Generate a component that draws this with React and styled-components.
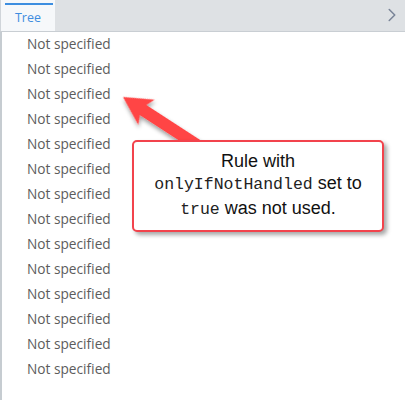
import React from "react";
import styled, { createGlobalStyle } from "styled-components";
import { ChevronRight } from "lucide-react";

const Global = createGlobalStyle`
  html, body { margin: 0; padding: 0; background: #ffffff; }
  body { width: 405px; height: 400px; overflow: hidden; font-family: "Open Sans", "Noto Sans", sans-serif; }
  #root { width: 405px; height: 400px; }
`;

const Page = styled.div`
  position: relative;
  width: 405px;
  height: 400px;
  display: flex;
  flex-direction: column;
  background: #ffffff;
`;

const TabBar = styled.div`
  height: 31px;
  flex: none;
  display: flex;
  align-items: stretch;
  justify-content: space-between;
  background: #dee1e4;
  border-bottom: 1px solid #c9ced3;
`;

const Tab = styled.div`
  width: 54px;
  display: flex;
  flex-direction: column;
  background: #f6f8fa;
  border-left: 1px solid #d0d5da;
`;

const TabIndicator = styled.div`
  height: 2px;
  margin: 3px 2px 0 4px;
  background: #3d8ee0;
`;

const TabLabel = styled.div`
  flex: 1;
  display: flex;
  align-items: center;
  justify-content: center;
  padding-bottom: 2px;
  font-size: 12.5px;
  color: #3f8de0;
`;

const ScrollButton = styled.div`
  display: flex;
  align-items: center;
  padding: 0 2px 2px 0;
  color: #7a8598;
`;

const Body = styled.div`
  flex: 1;
  display: flex;
  flex-direction: column;
  border-left: 2px solid #c6ccd1;
`;

const Row = styled.div`
  height: 25px;
  box-sizing: border-box;
  flex: none;
  display: flex;
  align-items: center;
  padding: 0 0 2px 25px;
  font-size: 13.7px;
  color: #5c5c5c;
`;

const Annotation = styled.svg`
  position: absolute;
  left: 0;
  top: 0;
  width: 405px;
  height: 400px;
  pointer-events: none;
  overflow: visible;
`;

const Callout = styled.div`
  position: absolute;
  left: 132px;
  top: 140px;
  width: 252px;
  height: 92px;
  box-sizing: border-box;
  border: 2px solid #f2434c;
  border-radius: 5px;
  background: #ffffff;
  box-shadow: 3px 3px 4px rgba(0, 0, 0, 0.35);
  display: flex;
  align-items: center;
  justify-content: center;
  text-align: center;
  font-family: "Liberation Sans", Arial, sans-serif;
  font-size: 18px;
  line-height: 22.5px;
  color: #111111;
  padding-bottom: 1px;
`;

const Code = styled.code`
  font-family: "Liberation Mono", "DejaVu Sans Mono", monospace;
  font-size: 16.5px;
  color: #222222;
`;

export default function App() {
  const rows = Array.from({ length: 14 });
  return (
    <>
      <Global />
      <Page>
        <TabBar>
          <Tab>
            <TabIndicator />
            <TabLabel>Tree</TabLabel>
          </Tab>
          <ScrollButton>
            <ChevronRight size={22} strokeWidth={1.7} />
          </ScrollButton>
        </TabBar>
        <Body>
          {rows.map((_, i) => (
            <Row key={i}>Not specified</Row>
          ))}
        </Body>
        <Annotation viewBox="0 0 405 400">
          <defs>
            <filter id="arrowShadow" x="-30%" y="-30%" width="160%" height="160%">
              <feDropShadow dx="2" dy="2" stdDeviation="2" floodColor="#000" floodOpacity="0.4" />
            </filter>
          </defs>
          <polygon
            transform="translate(123 97) rotate(33)"
            points="0,0 28,15 24,6 110,6 110,-6 24,-6 28,-15"
            fill="#ff4444"
            filter="url(#arrowShadow)"
          />
        </Annotation>
        <Callout>
          <div>
            Rule with
            <br />
            <Code>onlyIfNotHandled</Code> set to
            <br />
            <Code>true</Code> was not used.
          </div>
        </Callout>
      </Page>
    </>
  );
}
